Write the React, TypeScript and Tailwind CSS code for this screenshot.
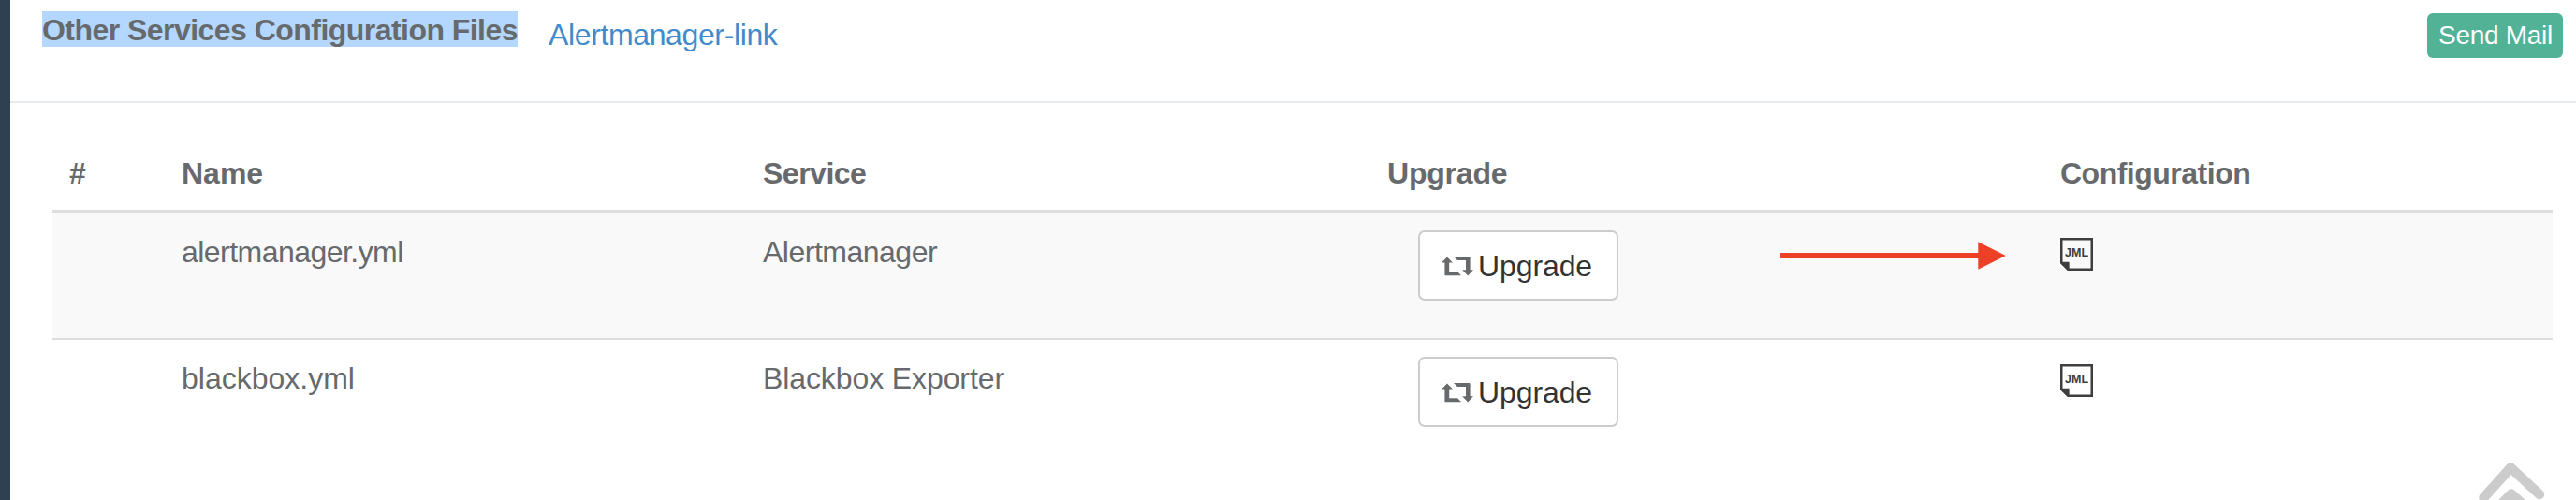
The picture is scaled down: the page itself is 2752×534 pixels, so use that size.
const cols = 'grid grid-cols-[120px_621px_667px_718px_1fr] pl-[18px]';

function RetweetIcon() {
  return (
    <svg width="34" height="21" viewBox="0 0 34 21" className="mt-[26px] shrink-0" fill="#676a6c">
      <path d="M6 0.4 L12 6.4 H8.2 V16.2 H17.2 L21 20.3 H4.2 Q3.4 20.3 3.4 19.4 V6.4 H0 Z" />
      <path d="M13 0 H29.6 Q30.6 0 30.6 0.9 V14.2 H34 L28.2 20.4 L22.2 14.2 H26 V4.1 H17 Z" />
    </svg>
  );
}

function JmlIcon() {
  return (
    <svg width="35" height="35" viewBox="0 0 35 35" className="mt-[26px] ml-px block">
      <path d="M1.25 1.25 H33.75 V33.75 H8.5 L1.25 26.5 Z" fill="none" stroke="#3e3e3e" strokeWidth="2.5" />
      <path d="M0 25.7 H9.6 V35 H8 L0 27 Z" fill="#3e3e3e" />
      <text x="17.6" y="20.2" textAnchor="middle" textLength="25" lengthAdjust="spacingAndGlyphs" fontFamily="Liberation Sans, sans-serif" fontWeight="700" fontSize="13.5" fill="#3e3e3e">JML</text>
    </svg>
  );
}

function Arrow() {
  return (
    <svg width="241" height="30" viewBox="0 0 241 30" className="absolute top-[30px] left-[420px]" fill="#ec4126">
      <path d="M0 12 H211.3 V0.3 L240.8 15 L211.3 29.8 V18 H0 Z" />
    </svg>
  );
}

const rows = [
  { name: 'alertmanager.yml', service: 'Alertmanager', nameClass: 'tracking-[-0.54px]', serviceClass: 'tracking-[-0.5px]', rowClass: 'h-[133px] bg-[#f9f9f9]', arrow: true },
  { name: 'blackbox.yml', service: 'Blackbox Exporter', nameClass: '', serviceClass: 'tracking-[-0.1px]', rowClass: 'h-[135px] border-t-2 border-[#ddd]', arrow: false },
];

export default function App() {
  return (
    <div className="flex h-[534px] w-[2752px] overflow-hidden bg-white font-['Liberation_Sans',Arial,sans-serif] text-[32px] leading-[38px] text-[#676a6c]">
      <aside className="w-[11px] shrink-0 bg-[#2f4050]" />
      <main className="relative min-w-0 flex-1">
        <header className="flex h-[110px] items-start border-b-2 border-[#e7eaec] pl-[34px]">
          <h5 className="mt-[12px] h-[38px] w-[508px] bg-[#b3d7ff] leading-[40px] font-bold tracking-[-0.54px] whitespace-nowrap">
            Other Services Configuration Files
          </h5>
          <a className="mt-[18px] ml-[33px] tracking-[-0.37px] whitespace-nowrap text-[#428bca]">Alertmanager-link</a>
          <button className="mt-[14px] mr-[14px] ml-auto h-[48px] w-[145px] rounded-[6px] bg-[#52b295] pl-[12px] text-left text-[28px] leading-[48px] tracking-[-0.3px] whitespace-nowrap text-white">
            Send Mail
          </button>
        </header>
        <section className="mr-[25px] ml-[45px] pt-[56px]">
          <div className={`${cols} h-[62px] border-b-4 border-[#ddd] font-bold`}>
            <div>#</div>
            <div>Name</div>
            <div className="tracking-[-0.5px]">Service</div>
            <div className="tracking-[-0.2px]">Upgrade</div>
            <div className="pl-px tracking-[-0.5px]">Configuration</div>
          </div>
          {rows.map((r) => (
            <div key={r.name} className={`${cols} ${r.rowClass}`}>
              <div />
              <div className={`mt-[22px] ${r.nameClass}`}>{r.name}</div>
              <div className={`mt-[22px] ${r.serviceClass}`}>{r.service}</div>
              <div className="relative pt-[18px] pl-[33px]">
                <button className="flex h-[75px] w-[214px] items-start rounded-[7px] border-2 border-[#ccc] bg-white pl-[23px] text-[#333]">
                  <RetweetIcon />
                  <span className="mt-[17px] ml-[5px] tracking-[-0.1px]">Upgrade</span>
                </button>
                {r.arrow && <Arrow />}
              </div>
              <div>
                <JmlIcon />
              </div>
            </div>
          ))}
        </section>
        <svg width="80" height="42" viewBox="0 0 80 42" className="absolute right-[30px] bottom-0" fill="none" stroke="#cccccc" strokeWidth="10.5" strokeLinecap="round" strokeLinejoin="round">
          <path d="M11.5 39.5 L40.2 7.5 L71 36" />
          <path d="M10 67 L41 35.5 L74 66" />
          <path d="M41 38 L36 44 H47 Z" fill="#cccccc" strokeWidth="4" />
        </svg>
      </main>
    </div>
  );
}
